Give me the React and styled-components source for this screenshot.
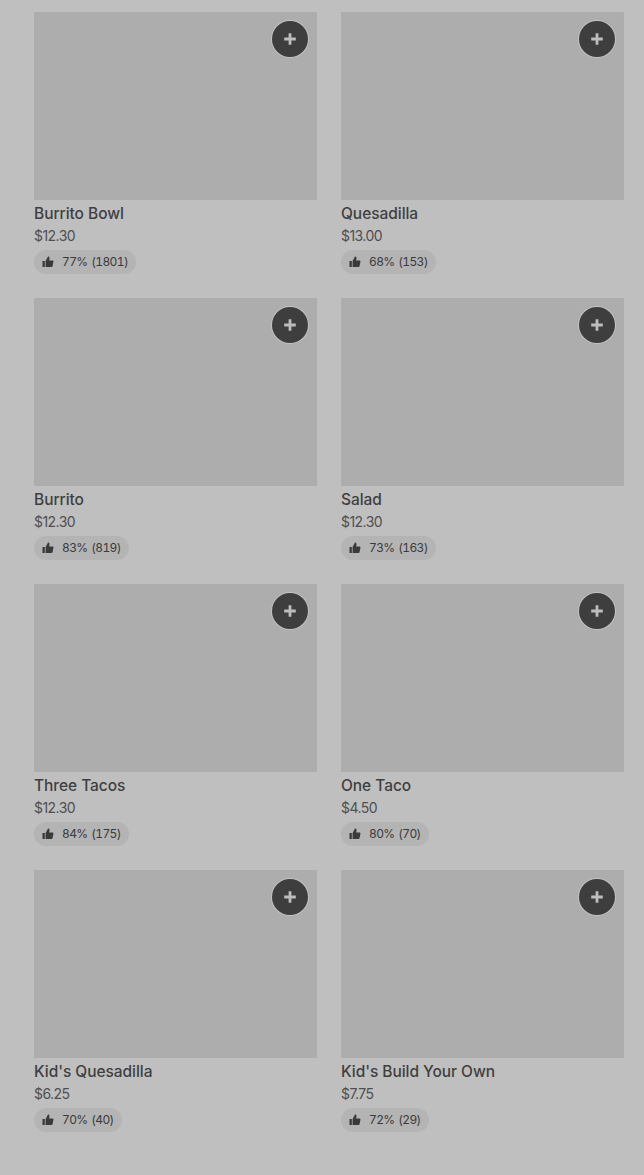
import React from "react";
import styled, { createGlobalStyle } from "styled-components";

const Global = createGlobalStyle`
  html, body { margin: 0; padding: 0; background: #bfbfbf; }
  body { font-family: "Inter", "Liberation Sans", sans-serif; }
`;

const Page = styled.main`
  box-sizing: border-box;
  width: 644px;
  height: 1175px;
  padding: 12px 20px 0 34px;
  background: #bfbfbf;
`;
const Grid = styled.div`
  display: grid;
  grid-template-columns: 283px 283px;
  column-gap: 24px;
  row-gap: 24px;
`;
const Card = styled.article`
  display: flex;
  flex-direction: column;
  height: 262px;
`;
const Photo = styled.div`
  position: relative;
  flex: none;
  height: 188px;
  background: #adadad;
`;
const AddButton = styled.button`
  position: absolute;
  top: 9px;
  right: 9px;
  width: 36px;
  height: 36px;
  padding: 0;
  border: none;
  border-radius: 50%;
  background: #3e3e3e;
  box-shadow: 0 0 0 1px #c2c2c2;
  display: flex;
  align-items: center;
  justify-content: center;
`;
const Title = styled.div`
  margin-top: 4px;
  height: 20px;
  font-size: 15.5px;
  line-height: 20px;
  font-weight: 500;
  letter-spacing: -0.05px;
  color: #3f3f3f;
  white-space: nowrap;
`;
const Price = styled.div`
  margin-top: 2px;
  height: 20px;
  font-size: 14px;
  line-height: 20px;
  color: #4f4f4f;
  letter-spacing: -0.55px;
`;
const Pill = styled.div`
  margin-top: 4px;
  align-self: flex-start;
  height: 24px;
  box-sizing: border-box;
  display: flex;
  align-items: center;
  gap: 8px;
  padding: 0 8px;
  border-radius: 12px;
  background: #b4b4b4;
  font-size: 12px;
  line-height: 16px;
  font-variant-numeric: tabular-nums;
  letter-spacing: -0.6px;
  word-spacing: 1px;
  color: #3a3a3a;
  white-space: nowrap;
`;

const Plus = () => (
  <svg width="14" height="14" viewBox="0 0 14 14" aria-hidden="true">
    <path d="M5.6 1.2h2.8v4.4h4.4v2.8H8.4v4.4H5.6V8.4H1.2V5.6h4.4z" fill="#bdbdbd" />
  </svg>
);
const Thumb = () => (
  <svg width="12" height="12" viewBox="0 0 12 12" aria-hidden="true">
    <path d="M0.5 5h2.3v6H0.5zM3.6 5l2.4-4.4c1 0 1.6.7 1.5 1.7L7.2 4.4h3.3c.7 0 1.1.6 1 1.2l-1 4.6c-.1.5-.5.8-1 .8H3.6z" fill="#3a3a3a" />
  </svg>
);

const items = [
  ["Burrito Bowl", "$12.30", "77% (1801)"],
  ["Quesadilla", "$13.00", "68% (153)"],
  ["Burrito", "$12.30", "83% (819)"],
  ["Salad", "$12.30", "73% (163)"],
  ["Three Tacos", "$12.30", "84% (175)"],
  ["One Taco", "$4.50", "80% (70)"],
  ["Kid's Quesadilla", "$6.25", "70% (40)"],
  ["Kid's Build Your Own", "$7.75", "72% (29)"],
];

export default function App() {
  return (
    <Page>
      <Global />
      <Grid>
        {items.map(([name, price, rating]) => (
          <Card key={name}>
            <Photo>
              <AddButton aria-label={`Add ${name}`}><Plus /></AddButton>
            </Photo>
            <Title>{name}</Title>
            <Price>{price}</Price>
            <Pill><Thumb />{rating}</Pill>
          </Card>
        ))}
      </Grid>
    </Page>
  );
}
